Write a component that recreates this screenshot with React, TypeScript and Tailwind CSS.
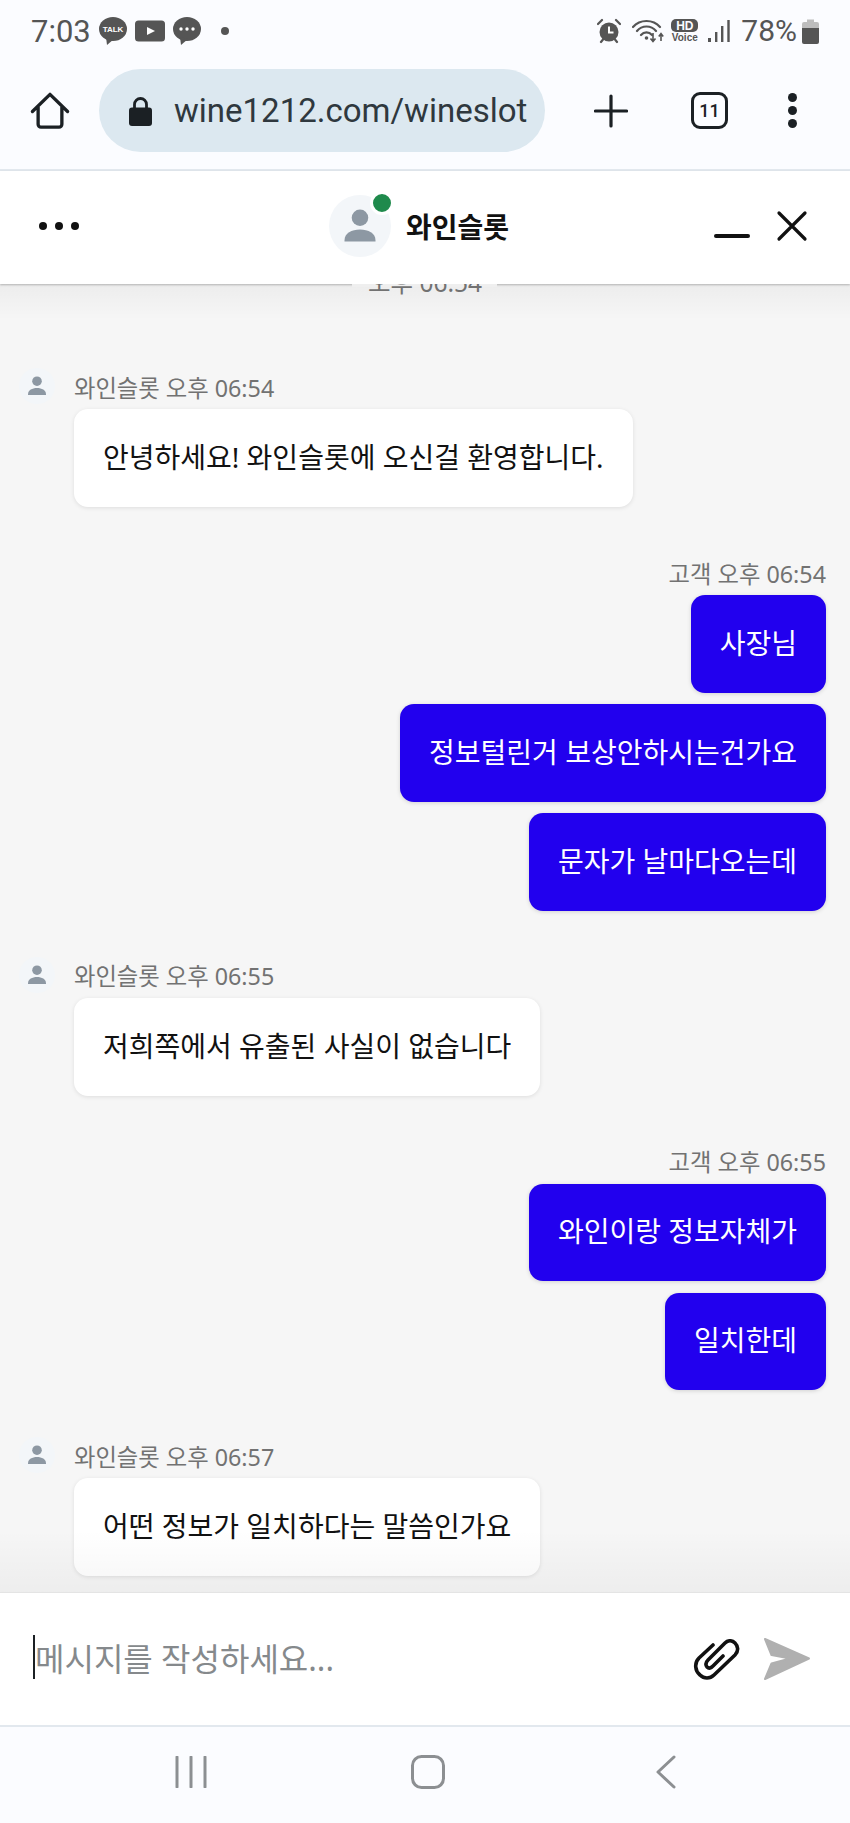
import React from "react";

const KO = "font-['Noto_Sans','Noto_Sans_CJK_KR',sans-serif]";

function Person({ size, bg }: { size: number; bg?: boolean }) {
  return (
    <svg width={size} height={size} viewBox="0 0 60 60" className="block">
      {bg && <circle cx="30" cy="30" r="30" fill="#f3f6f9" />}
      <circle cx="30" cy="22" r="8" fill="#8d98a3" />
      <path d="M15 44 C15 37 22 33.500 30 33.500 C38 33.500 45 37 45 44 L45 45 L15 45 Z" fill="#8d98a3" />
    </svg>
  );
}

function Bubble({ children }: { children: React.ReactNode }) {
  return (
    <div className="flex h-[98px] items-center rounded-[14px] bg-white px-[29px] pb-[2px] text-[28px] text-[#111] shadow-[0_1px_4px_rgba(0,0,0,0.1)]">
      {children}
    </div>
  );
}

function Mine({ children }: { children: React.ReactNode }) {
  return (
    <div className="flex h-[97.5px] items-center rounded-[14px] bg-[#2200ee] px-[29px] pb-[2px] text-[28px] text-white shadow-[0_1px_4px_rgba(0,0,0,0.15)]">
      {children}
    </div>
  );
}

function Agent({ time, text, className }: { time: string; text: string; className: string }) {
  return (
    <div className={className}>
      <div className="flex h-[26px] items-center">
        <div className="ml-[19px] mr-[19px] -mt-[4px]">
          <Person size={36} bg />
        </div>
        <span className="text-[23.3px] text-[#727272]">와인슬롯 오후 {time}</span>
      </div>
      <div className="ml-[74px] mt-[8px] w-fit">
        <Bubble>{text}</Bubble>
      </div>
    </div>
  );
}

function Customer({ time, texts, className }: { time: string; texts: string[]; className: string }) {
  return (
    <div className={className}>
      <div className="flex h-[26px] items-center justify-end pr-[24px] text-[23.3px] text-[#727272]">
        고객 오후 {time}
      </div>
      <div className="mt-[8px] flex flex-col items-end gap-[11.5px] pr-[24px]">
        {texts.map((t) => (
          <Mine key={t}>{t}</Mine>
        ))}
      </div>
    </div>
  );
}

function TalkBubble({ children }: { children: React.ReactNode }) {
  return (
    <svg width="30" height="30" viewBox="0 0 30 30" className="block">
      <ellipse cx="15" cy="13" rx="14" ry="12" fill="#555" />
      <path d="M8 21 L9 29 L16 23 Z" fill="#555" />
      {children}
    </svg>
  );
}

export default function App() {
  return (
    <div className={`flex h-[1823px] w-[850px] flex-col overflow-hidden bg-[#f6f6f6] ${KO}`}>
      {/* phone + browser chrome */}
      <div className="h-[171px] shrink-0 border-b-2 border-[#e2e8ee] bg-[#fbfcff]">
        <div className="flex h-[60px] items-center pl-[31px] pr-[31px] pt-[2px] font-['Roboto',sans-serif] text-[#555]">
          <span className="mr-[7px] text-[31px] font-normal leading-none">7:03</span>
          <div className="mr-[7px]">
            <TalkBubble>
              <text x="15" y="16" textAnchor="middle" fontSize="8" fontWeight="700" fill="#fff" fontFamily="Liberation Sans, sans-serif">TALK</text>
            </TalkBubble>
          </div>
          <svg width="30" height="22" viewBox="0 0 30 22" className="mr-[7px] block">
            <rect x="0" y="0.500" width="30" height="21" rx="3.500" fill="#555" />
            <path d="M12 7 L20 11 L12 15 Z" fill="#fff" />
          </svg>
          <TalkBubble>
            <circle cx="9" cy="13" r="1.700" fill="#fff" />
            <circle cx="15" cy="13" r="1.700" fill="#fff" />
            <circle cx="21" cy="13" r="1.700" fill="#fff" />
          </TalkBubble>
          <span className="ml-[19px] h-[8px] w-[8px] rounded-full bg-[#555]" />
          <div className="flex-1" />
          <svg width="24" height="26" viewBox="0 0 24 26" className="mr-[11px] block">
            <circle cx="12" cy="14" r="9.500" fill="#555" />
            <path d="M12 8.500 V14.500 H16.500" stroke="#fff" strokeWidth="2" fill="none" />
            <path d="M1 6 L5 2 M23 6 L19 2 M4 24 L6 21.500 M20 24 L18 21.500" stroke="#555" strokeWidth="2.200" strokeLinecap="round" />
          </svg>
          <svg width="33" height="24" viewBox="0 0 33 24" className="mr-[6px] block">
            <path d="M1 8 C8 0 21 0 28 8 M5 12 C10 6 19 6 24 12 M9 16 C12 12.500 17 12.500 20 16" stroke="#555" strokeWidth="2.200" fill="none" strokeLinecap="round" />
            <circle cx="14.500" cy="19" r="1.800" fill="#555" />
            <path d="M21 14 V22 M18.500 19.500 L21 22.500 L23.500 19.500 M29 22 V15 M26.800 17.500 L29 14.500 L31.200 17.500" stroke="#555" strokeWidth="1.600" fill="none" />
          </svg>
          <div className="mr-[10px] flex w-[27px] flex-col items-center">
            <span className="flex h-[13px] w-[27px] items-center justify-center rounded-[5px] bg-[#555] font-['Liberation_Sans',sans-serif] text-[12px] font-bold leading-none text-[#fbfcff]">HD</span>
            <span className="font-['Liberation_Sans',sans-serif] text-[10px] font-bold leading-[11px]">Voice</span>
          </div>
          <svg width="22" height="24" viewBox="0 0 22 24" className="mr-[11px] block">
            <rect x="0" y="19" width="3" height="4" fill="#555" />
            <rect x="7" y="13" width="2.400" height="10" fill="#555" />
            <rect x="13" y="7" width="2.400" height="16" fill="#555" />
            <rect x="19.300" y="1" width="2.400" height="22" fill="#555" />
          </svg>
          <span className="mr-[5px] text-[30px] font-normal leading-none">78%</span>
          <svg width="17" height="25" viewBox="0 0 17 25" className="block">
            <path d="M5 0.500 H12 V3 H15 A2 2 0 0 1 17 5 V9 H0 V5 A2 2 0 0 1 2 3 H5 Z" fill="#bdbdbd" />
            <path d="M0 9 H17 V23 A2 2 0 0 1 15 25 H2 A2 2 0 0 1 0 23 Z" fill="#555" />
          </svg>
        </div>
        <div className="mt-[9px] flex h-[83px] items-center">
          <svg width="40" height="38" viewBox="0 0 42 40" fill="none" className="ml-[30px] block">
            <path d="M2.500 20.500 L21 2.500 L39.500 20.500 M8.500 16 V34 A3 3 0 0 0 11.500 37 H30.500 A3 3 0 0 0 33.500 34 V16" stroke="#1b2024" strokeWidth="3.500" strokeLinecap="round" strokeLinejoin="round" />
          </svg>
          <div className="ml-[29px] flex h-[83px] w-[446px] items-center rounded-full bg-[#dce8f0] pl-[30px]">
            <svg width="23" height="30" viewBox="0 0 23 30" fill="none" className="block">
              <path d="M5.500 13 V8.500 A6 6 0 0 1 17.500 8.500 V13" stroke="#1b2024" strokeWidth="2.800" />
              <rect x="0" y="11.500" width="23" height="18.500" rx="3" fill="#1b2024" />
            </svg>
            <span className="ml-[22px] font-['Roboto',sans-serif] text-[33px] leading-none text-[#2f383e]">wine1212.com/wineslot</span>
          </div>
          <svg width="34" height="34" viewBox="0 0 34 34" className="ml-[49px] block">
            <path d="M17 2 V32 M1.500 17 H32.500" stroke="#1b2024" strokeWidth="3.200" strokeLinecap="round" />
          </svg>
          <div className="ml-[63px] flex h-[37px] w-[37px] items-center justify-center rounded-[9px] border-[3.5px] border-[#1b2024] font-['Roboto',sans-serif] text-[18px] font-medium leading-none text-[#1b2024]">
            11
          </div>
          <div className="ml-[60px] flex flex-col gap-[4px]">
            <span className="h-[9px] w-[9px] rounded-full bg-[#1b2024]" />
            <span className="h-[9px] w-[9px] rounded-full bg-[#1b2024]" />
            <span className="h-[9px] w-[9px] rounded-full bg-[#1b2024]" />
          </div>
        </div>
      </div>

      {/* chat header */}
      <div className="relative flex h-[113px] shrink-0 items-center bg-white pb-[3px] shadow-[0_1px_2px_rgba(0,0,0,0.25)]">
        <div className="ml-[39px] flex gap-[8px]">
          <span className="h-[8px] w-[8px] rounded-full bg-[#111]" />
          <span className="h-[8px] w-[8px] rounded-full bg-[#111]" />
          <span className="h-[8px] w-[8px] rounded-full bg-[#111]" />
        </div>
        <div className="relative ml-[250px] h-[62px] w-[62px] rounded-full">
          <Person size={62} bg />
          <span className="absolute right-[-3px] top-[-4px] h-[24px] w-[24px] rounded-full border-[3px] border-white bg-[#1f8a4c]" />
        </div>
        <span className="ml-[15px] font-['Noto_Sans_CJK_KR',sans-serif] text-[28px] font-bold leading-none text-[#111]">와인슬롯</span>
        <svg width="36" height="6" viewBox="0 0 36 6" className="ml-[205px] mt-[20px] block">
          <path d="M2 3 H34" stroke="#111" strokeWidth="4" strokeLinecap="round" />
        </svg>
        <svg width="32" height="32" viewBox="0 0 32 32" className="ml-[26px] block">
          <path d="M3 3 L29 29 M29 3 L3 29" stroke="#111" strokeWidth="3.200" strokeLinecap="round" />
        </svg>
      </div>

      {/* messages */}
      <div className="relative z-10 h-[1308px] shrink-0 overflow-hidden">
        <div className="pointer-events-none absolute inset-x-0 top-0 h-[36px] bg-gradient-to-b from-[rgba(0,0,0,0.04)] to-transparent" />
        <span className="absolute left-[352px] top-0 h-[3px] w-[145px] bg-[#efefef]" />
        <div className="relative -mt-[16px] mb-[-1px] flex h-[30px] items-center justify-center text-[24.5px] text-[#727272]">오후 06:54</div>
        <Agent className="mt-[78px]" time="06:54" text="안녕하세요! 와인슬롯에 오신걸 환영합니다." />
        <Customer className="mt-[54px]" time="06:54" texts={["사장님", "정보털린거 보상안하시는건가요", "문자가 날마다오는데"]} />
        <Agent className="mt-[53px]" time="06:55" text="저희쪽에서 유출된 사실이 없습니다" />
        <Customer className="mt-[54px]" time="06:55" texts={["와인이랑 정보자체가", "일치한데"]} />
        <Agent className="mt-[54px]" time="06:57" text="어떤 정보가 일치하다는 말씀인가요" />
        <div className="pointer-events-none absolute inset-x-0 bottom-0 h-[62px] bg-gradient-to-b from-transparent to-[rgba(0,0,0,0.035)]" />
      </div>

      {/* input */}
      <div className="flex h-[133px] shrink-0 items-center border-t border-[#e4e4e4] bg-white pb-[4px]">
        <span className="ml-[33px] h-[44px] w-[2px] bg-[#1b2024]" />
        <span className="mt-[4px] w-[658px] text-[32px] text-[#85898c]">메시지를 작성하세요...</span>
        <svg width="48" height="42" viewBox="0 0 48 42" fill="none" className="mt-[5px] block">
          <path d="M20 6 L6 19 C1 24 2 32 7 36 C11 40 17 40 21 36 L42 16 C46 12 45 7 42 4 C39 1 35 1 32 4 L15 21 C12.500 23.500 12.500 26 14 28 C16 30 18 29 20 27 L30 17" stroke="#111" strokeWidth="3.600" strokeLinecap="round" strokeLinejoin="round" />
        </svg>
        <svg width="50" height="46" viewBox="0 0 50 46" className="ml-[21px] mt-[4px] block">
          <path d="M3 3 L47 22.500 L3 43 L9.500 27.500 L28 22.500 L9.500 19 Z" fill="#b0b0b0" stroke="#b0b0b0" strokeWidth="2" strokeLinejoin="round" />
        </svg>
      </div>

      {/* system nav */}
      <div className="flex h-[99px] shrink-0 items-center border-t-2 border-[#e2e8ee] bg-[#fbfcff] pb-[8px]">
        <svg width="32" height="32" viewBox="0 0 32 32" className="ml-[175px] block">
          <path d="M2 1 V31 M16 1 V31 M30 1 V31" stroke="#8c8f92" strokeWidth="3" strokeLinecap="round" />
        </svg>
        <svg width="34" height="34" viewBox="0 0 34 34" fill="none" className="ml-[204px] block">
          <rect x="1.500" y="1.500" width="31" height="31" rx="9" stroke="#8c8f92" strokeWidth="3" />
        </svg>
        <svg width="20" height="34" viewBox="0 0 20 34" fill="none" className="ml-[211px] block">
          <path d="M18 2 L2 17 L18 32" stroke="#8c8f92" strokeWidth="3" strokeLinecap="round" strokeLinejoin="round" />
        </svg>
      </div>
    </div>
  );
}
